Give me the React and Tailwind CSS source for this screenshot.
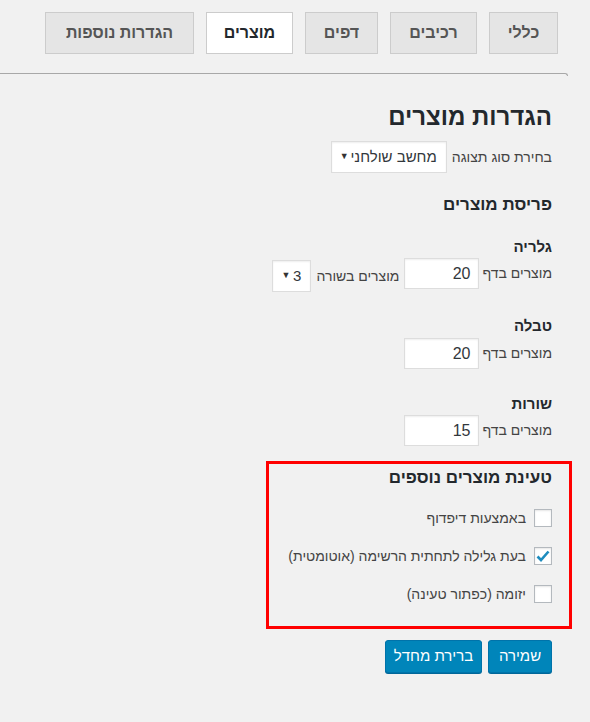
import { useState } from 'react';

const TABS = [
  { label: 'כללי', w: 'w-[69px]' },
  { label: 'רכיבים', w: 'w-[87px]' },
  { label: 'דפים', w: 'w-[73px]' },
  { label: 'מוצרים', w: 'w-[87px]' },
  { label: 'הגדרות נוספות', w: 'w-[149px]' },
];

function NumInput({ value }) {
  return (
    <div className="w-[75px] h-[31px] shrink-0 bg-white border border-[#ddd] shadow-[inset_0_1px_2px_rgba(0,0,0,0.07)] flex items-center pr-[8px] text-[16px] text-[#32373c]">
      {value}
    </div>
  );
}

function Select({ value, w, className = '' }) {
  return (
    <div className={`${w} ${className} h-[32px] shrink-0 whitespace-nowrap bg-white border border-[#ddd] shadow-[inset_0_1px_2px_rgba(0,0,0,0.07)] flex items-center justify-between pr-[9px] pl-[8px] text-[15px] text-[#32373c]`}>
      <span>{value}</span>
      <span className="text-[9px] text-[#333]">▼</span>
    </div>
  );
}

function Check({ checked, label }) {
  return (
    <div className="flex items-center gap-[8px] h-[18px]">
      <div className="w-[18px] h-[18px] shrink-0 bg-white border border-[#b4b9be] shadow-[inset_0_1px_2px_rgba(0,0,0,0.1)] flex items-center justify-center">
        {checked && (
          <svg width="14" height="12" viewBox="0 0 14 12">
            <path d="M1.5 6.5 L5 10 L12.5 1.5" fill="none" stroke="#1e8cbe" strokeWidth="2.6" />
          </svg>
        )}
      </div>
      <span className="text-[14px] text-[#444] whitespace-nowrap">{label}</span>
    </div>
  );
}

export default function App() {
  const [tab] = useState('מוצרים');

  return (
    <div dir="rtl" className="w-[590px] h-[722px] bg-[#f1f1f1] font-['Liberation_Sans',Arial,sans-serif] text-[#444] overflow-hidden">
      <div className="flex gap-[12px] pt-[12px] pr-[32px]">
        {TABS.map(t => (
          <div
            key={t.label}
            className={`${t.w} h-[42px] border border-[#ccc] flex items-center justify-center text-[16px] font-semibold ${t.label === tab ? 'bg-white text-[#23282d]' : 'bg-[#e5e5e5] text-[#555]'}`}
          >
            {t.label}
          </div>
        ))}
      </div>

      <div className="mt-[19px] mr-[22px] border-t border-r border-[#a8a8a8] rounded-tr-[4px] h-[3px]" />

      <div className="pr-[38px] pt-[26px] flex flex-col">
        <h1 className="text-[24px] font-bold text-[#23282d] leading-[30px]">הגדרות מוצרים</h1>

        <div className="flex items-center gap-[5px] mt-[9px]">
          <span className="text-[14px]">בחירת סוג תצוגה</span>
          <Select value="מחשב שולחני" w="w-[116px]" />
        </div>

        <h2 className="text-[17px] font-bold text-[#23282d] mt-[20px] leading-[24px]">פריסת מוצרים</h2>

        <h3 className="text-[15px] font-bold text-[#23282d] mt-[20px] leading-[20px]">גלריה</h3>
        <div className="flex items-start mt-[1px]">
          <span className="text-[14px] ml-[3px] leading-[31px]">מוצרים בדף</span>
          <NumInput value="20" />
          <span className="text-[14px] mr-[5px] ml-[5px] mt-[2px] leading-[32px]">מוצרים בשורה</span>
          <Select value="3" w="w-[39px]" className="mt-[2px]" />
        </div>

        <h3 className="text-[15px] font-bold text-[#23282d] mt-[24px] leading-[20px]">טבלה</h3>
        <div className="flex items-center mt-[2px]">
          <span className="text-[14px] ml-[3px]">מוצרים בדף</span>
          <NumInput value="20" />
        </div>

        <h3 className="text-[15px] font-bold text-[#23282d] mt-[25px] leading-[20px]">שורות</h3>
        <div className="flex items-center mt-[1px]">
          <span className="text-[14px] ml-[3px]">מוצרים בדף</span>
          <NumInput value="15" />
        </div>

        <div className="-mr-[20px] mt-[15px] w-[306px] h-[168px] border-[3px] border-[#f00] pr-[17px] pt-[2px] flex flex-col">
          <h2 className="text-[17px] font-bold text-[#23282d] leading-[24px]">טעינת מוצרים נוספים</h2>
          <div className="flex flex-col gap-[20px] mt-[19px]">
            <Check label="באמצעות דיפדוף" />
            <Check checked label="בעת גלילה לתחתית הרשימה (אוטומטית)" />
            <Check label="יזומה (כפתור טעינה)" />
          </div>
        </div>

        <div className="flex gap-[6px] mt-[11px]">
          <button className="w-[64px] h-[33px] bg-[#0085ba] border border-[#0073aa] rounded-[3px] shadow-[0_1px_0_#006799] text-white text-[15px]">שמירה</button>
          <button className="w-[97px] h-[33px] bg-[#0085ba] border border-[#0073aa] rounded-[3px] shadow-[0_1px_0_#006799] text-white text-[15px]">ברירת מחדל</button>
        </div>
      </div>
    </div>
  );
}
